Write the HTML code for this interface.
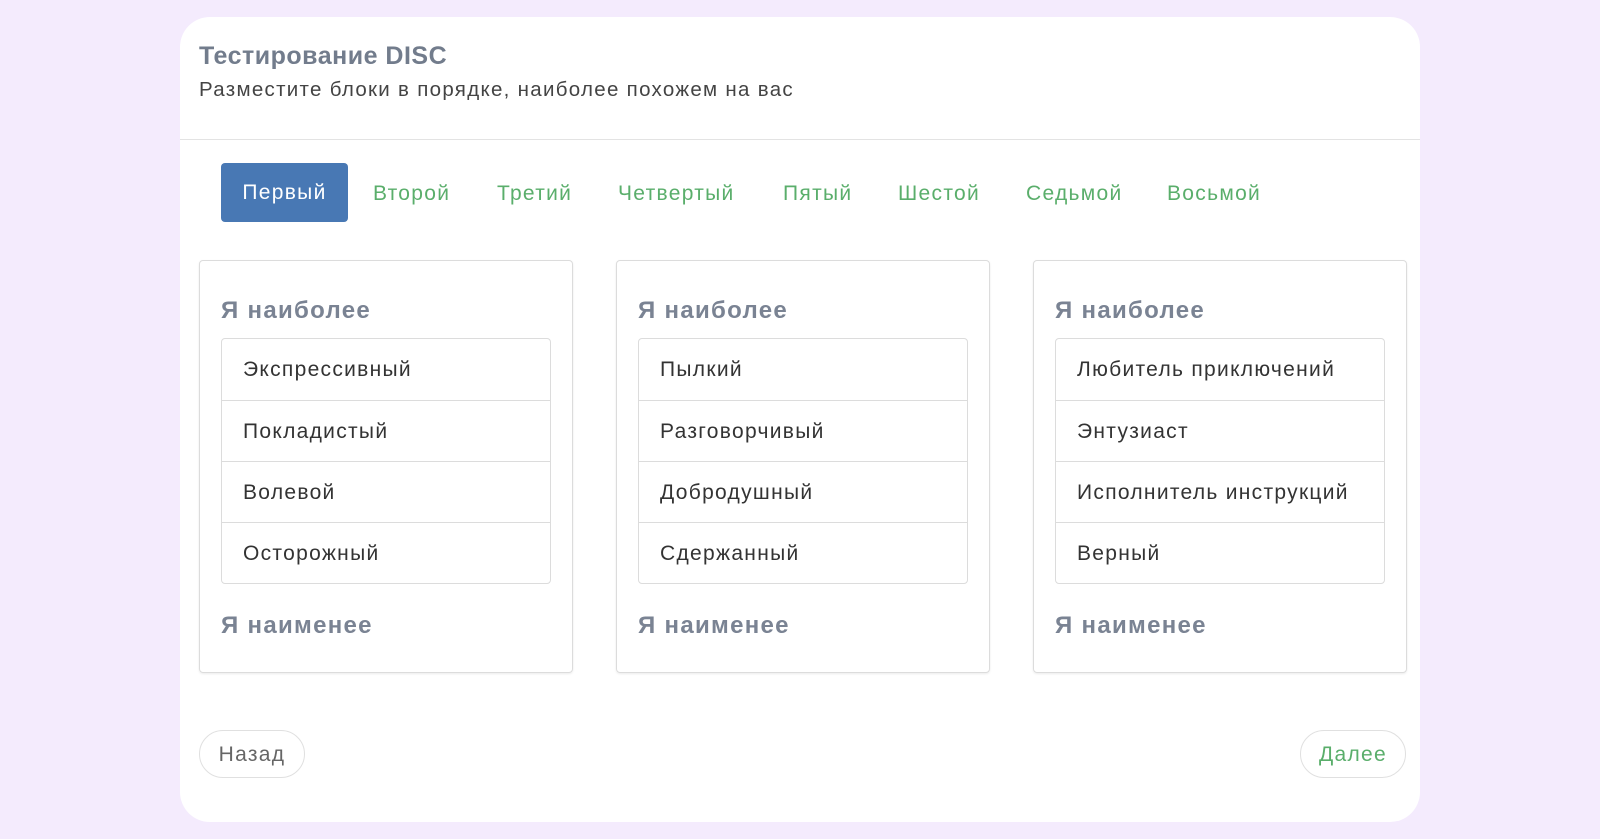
<!DOCTYPE html>
<html><head><meta charset="utf-8"><style>
*{box-sizing:border-box;margin:0;padding:0}
body{width:1600px;height:839px;background:#f4ebfd;font-family:"Liberation Sans","DejaVu Sans",sans-serif;position:relative;overflow:hidden;letter-spacing:1.3px}
.card{position:absolute;left:180px;top:17px;width:1240px;height:805px;background:#fff;border-radius:30px}
.title{position:absolute;left:19px;top:25px;font-size:25px;font-weight:bold;color:#727c8c;letter-spacing:0.5px}
.sub{position:absolute;left:19px;top:61px;font-size:20.5px;color:#444}
.hr{position:absolute;left:0;right:0;top:122px;border-top:1.5px solid #e3e3e3}
.tab{position:absolute;top:147px;height:59px;line-height:59px;font-size:21px;color:#5aae6b}
.tab.act{top:146px;background:#4878b4;color:#fff;border-radius:4px;width:127px;text-align:center;left:41px}
.box{position:absolute;top:243px;width:374px;height:413px;border:1.5px solid #dcdcdc;border-radius:4px;box-shadow:0 1px 2px rgba(0,0,0,.08)}
.h{position:absolute;left:21px;font-size:24px;font-weight:bold;color:#7a8393}
.list{position:absolute;left:21px;top:77px;width:330px;border:1.5px solid #dcdcdc;border-radius:4px}
.list div{height:61px;line-height:62px;padding-left:21px;font-size:21px;color:#333;border-top:1.5px solid #dcdcdc}
.list div:first-child{border-top:none}
.btn{position:absolute;top:713px;width:106px;height:48px;border:1.5px solid #e0e0e0;border-radius:24px;text-align:center;line-height:48px;font-size:21px}
</style></head><body>
<div class="card">
<div class="title">Тестирование DISC</div>
<div class="sub">Разместите блоки в порядке, наиболее похожем на вас</div>
<div class="hr"></div>
<div class="tab act">Первый</div>
<div class="tab" style="left:193px">Второй</div>
<div class="tab" style="left:317px">Третий</div>
<div class="tab" style="left:438px">Четвертый</div>
<div class="tab" style="left:603px">Пятый</div>
<div class="tab" style="left:718px">Шестой</div>
<div class="tab" style="left:846px">Седьмой</div>
<div class="tab" style="left:987px">Восьмой</div>

<div class="box" style="left:19px">
<div class="h" style="top:36px">Я наиболее</div>
<div class="list"><div>Экспрессивный</div><div>Покладистый</div><div>Волевой</div><div>Осторожный</div></div>
<div class="h" style="top:351px">Я наименее</div>
</div>
<div class="box" style="left:436px">
<div class="h" style="top:36px">Я наиболее</div>
<div class="list"><div>Пылкий</div><div>Разговорчивый</div><div>Добродушный</div><div>Сдержанный</div></div>
<div class="h" style="top:351px">Я наименее</div>
</div>
<div class="box" style="left:853px">
<div class="h" style="top:36px">Я наиболее</div>
<div class="list"><div>Любитель приключений</div><div>Энтузиаст</div><div>Исполнитель инструкций</div><div>Верный</div></div>
<div class="h" style="top:351px">Я наименее</div>
</div>

<div class="btn" style="left:19px;color:#666">Назад</div>
<div class="btn" style="left:1120px;color:#5aae6b">Далее</div>
</div>
</body></html>
